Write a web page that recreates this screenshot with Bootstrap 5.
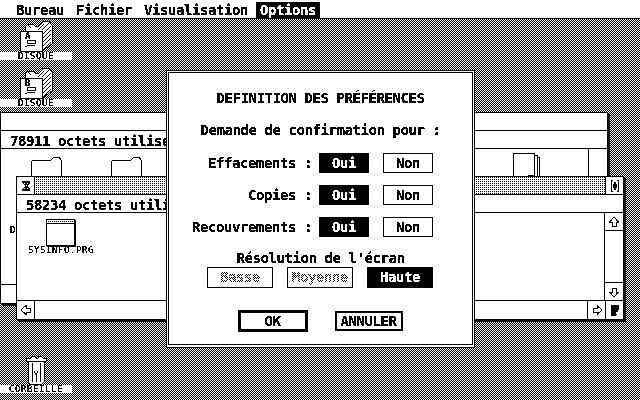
<!DOCTYPE html>
<html lang="fr">

<head>
  <meta charset="UTF-8">
  <meta name="viewport" content="width=device-width, initial-scale=1.0">
  <title>GEM Desktop - Préférences</title>
  <link rel="stylesheet" href="https://cdn.jsdelivr.net/npm/bootstrap@5.3.0/dist/css/bootstrap.min.css">
  <style>
    html, body {
      width: 640px;
      height: 400px;
      margin: 0;
      overflow: hidden;
    }

    .desk {
      width: 640px;
      height: 400px;
      overflow: hidden;
      color: #000;
      background: repeating-conic-gradient(#000 0 25%, #fff 0 50%) 0 0 / 2px 2px;
      font: bold 14px/16px "DejaVu Sans Mono", monospace;
      letter-spacing: -.43px;
      filter: url(#mono);
    }

    svg { display: block; shape-rendering: crispEdges; }

    /* menu bar */
    .menu-bar {
      height: 19px;
      padding-left: 12px;
      background: #fff;
      border-bottom: 1px solid #000;
      gap: 4px;
    }
    .menu-title { padding: 0 4px; height: 16px; margin-top: 2px; white-space: pre; }
    .menu-title.active { background: #000; color: #fff; -webkit-text-stroke: .4px #fff; }

    /* desktop icons */
    .desk-icon { left: 0; width: 72px; }
    .icon-a { top: 20px; }
    .icon-b { top: 67px; }
    .icon-trash { top: 355px; }
    .disk-svg { margin-left: 19px; }
    .trash-svg { margin-left: 25px; }
    .icon-label, .small-txt {
      font: 9px/8px "DejaVu Sans Mono", monospace;
      letter-spacing: .58px;
      white-space: nowrap;
      filter: url(#mono-dark);
    }
    .icon-label {
      height: 8px;
      background: #fff;
      text-align: center;
    }

    /* windows */
    .gem-win {
      background: #fff;
      border: 1px solid #000;
      box-shadow: 2px 2px 0 #000;
    }
    .win-back { left: 0; top: 112px; width: 608px; height: 192px; }
    .win-front { left: 16px; top: 176px; width: 608px; height: 144px; }
    .title-row { height: 18px; border-bottom: 1px solid #000; flex: none; }
    .info-row {
      height: 18px;
      padding-left: 9px;
      border-bottom: 1px solid #000;
      white-space: nowrap;
      flex: none;
      line-height: 20px;
    }
    .ctl-box {
      width: 18px;
      flex: none;
      background: #fff;
    }
    .ctl-v { width: 100%; height: 18px; }
    .dots {
      background: conic-gradient(#000 0 25%, #fff 0) 0 0 / 2px 2px;
    }
    .win-body { flex: 1; min-height: 0; position: relative; }
    .v-bar { width: 19px; flex: none; border-left: 1px solid #000; }
    .h-bar { height: 19px; flex: none; border-top: 1px solid #000; }
    .line-t { border-top: 1px solid #000; }
    .line-b { border-bottom: 1px solid #000; }
    .line-l { border-left: 1px solid #000; }
    .line-r { border-right: 1px solid #000; }

    /* things lying on the window canvas */
    .folder-1 { left: 30px; top: 7px; }
    .folder-2 { left: 110px; top: 7px; }
    .doc-1 { left: 511px; top: 3px; }
    .back-label { left: 9px; top: 77px; }
    .prg-icon { left: 29px; top: 6px; }
    .prg-label { left: 11px; top: 33px; }

    /* dialog */
    .dlg-outer {
      left: 166px;
      top: 70px;
      width: 309px;
      height: 278px;
      padding: 1px 1px 2px;
      background: #fff;
      border: 1px solid #000;
    }
    .dlg-inner {
      height: 100%;
      background: #fff;
      border: 1px solid #000;
      padding-top: 17px;
    }
    .dlg-txt { height: 16px; white-space: pre; }
    .dlg-sub { margin-top: 16px; }
    .dlg-row { height: 20px; white-space: pre; margin-top: 12px; }
    .dlg-row.first { margin-top: 15px; }
    .row-label { width: 143px; text-align: right; line-height: 20px; margin-right: 7px; }
    .st-btn {
      font: inherit;
      letter-spacing: inherit;
      border: 1px solid #000;
      border-radius: 0;
      padding: 0;
      color: #000;
      background: #fff;
      line-height: 18px;
    }
    .st-btn.yes { width: 50px; }
    .st-btn.yes + .st-btn.yes { margin-left: 14px; }
    .st-btn.res { width: 66px; height: 21px; line-height: 19px; }
    .st-btn.on { background: #000; color: #fff; -webkit-text-stroke: .4px #fff; }
    .st-btn.off span {
      color: transparent;
      background: repeating-conic-gradient(#000 0 25%, #fff 0 50%) 0 0 / 2px 2px;
      -webkit-background-clip: text;
      background-clip: text;
    }
    .st-btn.ok { width: 70px; height: 22px; border-width: 3px; line-height: 16px; }
    .st-btn.cancel { width: 68px; height: 20px; border-width: 2px; line-height: 16px; }
    .res-head { margin-top: 13px; }
    .res-row { margin-top: 1px; gap: 14px; padding-right: 1px; }
    .act-row { margin-top: 22px; gap: 27px; height: 22px; padding-right: 1px; }
  </style>
</head>

<body>
  <svg width="0" height="0" class="position-absolute">
    <filter id="mono" color-interpolation-filters="sRGB" x="0" y="0" width="100%" height="100%">
      <feComponentTransfer>
        <feFuncR type="discrete" tableValues="0 0 1"/>
        <feFuncG type="discrete" tableValues="0 0 1"/>
        <feFuncB type="discrete" tableValues="0 0 1"/>
      </feComponentTransfer>
    </filter>
    <filter id="mono-dark" color-interpolation-filters="sRGB" x="0" y="0" width="100%" height="100%">
      <feComponentTransfer>
        <feFuncR type="discrete" tableValues="0 0 0 1"/>
        <feFuncG type="discrete" tableValues="0 0 0 1"/>
        <feFuncB type="discrete" tableValues="0 0 0 1"/>
      </feComponentTransfer>
    </filter>
    <symbol id="disk" viewBox="0 0 34 32">
      <path d="M6 11V7l3-3h5l2 2h4l3-3 1-2h6l2 3 1 1v19L23 31H1V11z" fill="#fff" stroke="#000"/>
      <path d="M9 5l3 3M24 14l8-8M24 18l8-8M24 22l8-8M24 26l8-8M24 30l8-8M19 10l6-6M23 10l7-7" fill="none" stroke="#000"/>
      <rect x="1" y="11" width="22" height="20" fill="#fff" stroke="#000"/>
      <path d="M8 20h8v3H8zM8 25h8M6 26h2" fill="none" stroke="#000"/>
    </symbol>
  </svg>

  <div class="desk position-relative">
    <div class="menu-bar d-flex">
      <span class="menu-title">Bureau</span>
      <span class="menu-title">Fichier</span>
      <span class="menu-title">Visualisation</span>
      <span class="menu-title active">Options</span>
    </div>

    <div class="desk-icon icon-a position-absolute">
      <svg class="disk-svg" width="34" height="32" viewBox="0 0 34 32"><use href="#disk"/><text x="6" y="19" font-family="DejaVu Sans Mono" font-size="9">A</text></svg>
      <div class="icon-label">DISQUE</div>
    </div>
    <div class="desk-icon icon-b position-absolute">
      <svg class="disk-svg" width="34" height="32" viewBox="0 0 34 32"><use href="#disk"/><text x="6" y="19" font-family="DejaVu Sans Mono" font-size="9">B</text></svg>
      <div class="icon-label">DISQUE</div>
    </div>
    <div class="desk-icon icon-trash position-absolute">
      <svg class="trash-svg" width="22" height="30" viewBox="0 0 22 30">
        <path d="M2 3h4l2-2h2l1 2h2l1-2h2l2 2h3v3H1V3z" fill="#fff" stroke="#000"/>
        <path d="M3 6v21l2 2h12l2-2V6z" fill="#fff" stroke="#000"/>
        <path d="M7 8v19M15 8v19M11 20v7M9 16l2 4 2-4" fill="none" stroke="#000"/>
      </svg>
      <div class="icon-label">CORBEILLE</div>
    </div>

    <!-- window behind -->
    <div class="gem-win win-back position-absolute d-flex flex-column">
      <div class="title-row"></div>
      <div class="info-row">78911 octets utilisés</div>
      <div class="win-body d-flex">
        <div class="flex-grow-1 position-relative">
          <svg class="position-absolute folder-1" width="31" height="22" viewBox="0 0 31 22">
            <path d="M0 22V6l2-2h18l3-3h5l2 3v18" fill="#fff" stroke="#000"/>
          </svg>
          <svg class="position-absolute folder-2" width="31" height="22" viewBox="0 0 31 22">
            <path d="M0 22V6l2-2h18l3-3h5l2 3v18" fill="#fff" stroke="#000"/>
          </svg>
          <svg class="position-absolute doc-1" width="28" height="26" viewBox="0 0 28 26">
            <path d="M25 5h2v21M23 3h2v23" fill="#fff" stroke="#000"/>
            <rect x="1" y="1" width="21" height="25" fill="#fff" stroke="#000"/>
            <path d="M16 26v-3h6l-3 3" fill="#fff" stroke="#000"/>
          </svg>
          <span class="small-txt position-absolute back-label">DISQUE</span>
        </div>
        <div class="v-bar"></div>
      </div>
      <div class="h-bar"></div>
    </div>

    <!-- active window -->
    <div class="gem-win win-front position-absolute d-flex flex-column">
      <div class="title-row d-flex">
        <div class="ctl-box line-r d-flex align-items-center justify-content-center">
          <svg width="8" height="10" viewBox="0 0 8 10"><path d="M0 0h8v2L5 5l3 3v2H0V8l3-3L0 2z" fill="#000"/><path d="M2 2h1v1H2zM5 2h1v1H5zM4 4h1v1H4zM2 7h1v1H2zM5 7h1v1H5z" fill="#fff"/></svg>
        </div>
        <div class="flex-grow-1 dots"></div>
        <div class="ctl-box line-l d-flex align-items-center justify-content-center">
          <svg width="8" height="12" viewBox="0 0 8 12"><path d="M0 0h2v1H1v10h1v1H0zM8 0H6v1h1v10H6v1h2z" fill="#000"/><path d="M4 1l2 4v2l-2 4-2-4V5z" fill="#000"/></svg>
        </div>
      </div>
      <div class="info-row">58234 octets utilisés</div>
      <div class="win-body d-flex">
        <div class="flex-grow-1 position-relative">
          <svg class="position-absolute prg-icon" width="30" height="28" viewBox="0 0 30 28">
            <rect x="0.5" y="0.5" width="28" height="26" fill="#fff" stroke="#000"/>
            <path d="M2 2h1v1H2zM4 2h1v1H4zM6 2h1v1H6zM8 2h1v1H8zM10 2h1v1h-1zM12 2h1v1h-1zM14 2h1v1h-1zM16 2h1v1h-1zM18 2h1v1h-1zM20 2h1v1h-1zM22 2h1v1h-1zM24 2h1v1h-1zM26 2h1v1h-1z" fill="#000"/>
            <path d="M1 4h27" stroke="#000"/>
            <path d="M29 1v27H1" fill="none" stroke="#000" stroke-width="2"/>
          </svg>
          <span class="small-txt position-absolute prg-label">SYSINFO.PRG</span>
        </div>
        <div class="v-bar d-flex flex-column">
          <div class="ctl-box ctl-v line-b d-flex align-items-center justify-content-center">
            <svg width="10" height="10" viewBox="0 0 10 10"><path d="M5 0L9.5 5H7v4H3V5H.5z" fill="#fff" stroke="#000"/></svg>
          </div>
          <div class="flex-grow-1"></div>
          <div class="ctl-box ctl-v line-t d-flex align-items-center justify-content-center">
            <svg width="10" height="10" viewBox="0 0 10 10"><path d="M5 10L9.5 5H7V1H3v4H.5z" fill="#fff" stroke="#000"/></svg>
          </div>
        </div>
      </div>
      <div class="h-bar d-flex">
        <div class="ctl-box line-r d-flex align-items-center justify-content-center">
          <svg width="10" height="10" viewBox="0 0 10 10"><path d="M0 5L5 .5V3h4v4H5v2.5z" fill="#fff" stroke="#000"/></svg>
        </div>
        <div class="flex-grow-1"></div>
        <div class="ctl-box line-l d-flex align-items-center justify-content-center">
          <svg width="10" height="10" viewBox="0 0 10 10"><path d="M10 5L5 .5V3H1v4h4v2.5z" fill="#fff" stroke="#000"/></svg>
        </div>
        <div class="ctl-box line-l d-flex align-items-center justify-content-center">
          <svg width="8" height="11" viewBox="0 0 8 11"><path d="M0 0h8v11H0z" fill="#000"/><path d="M8 0v4L5 11h3zM5 9l1-3v3z" fill="#fff"/></svg>
        </div>
      </div>
    </div>

    <!-- preferences dialog -->
    <div class="dlg-outer position-absolute">
      <div class="dlg-inner">
        <div class="dlg-txt text-center">DEFINITION DES PRÉFÉRENCES</div>
        <div class="dlg-txt dlg-sub text-center">Demande de confirmation pour :</div>

        <div class="dlg-row first d-flex">
          <div class="row-label">Effacements :</div>
          <button class="btn st-btn yes on">Oui</button>
          <button class="btn st-btn yes">Non</button>
        </div>
        <div class="dlg-row d-flex">
          <div class="row-label">Copies :</div>
          <button class="btn st-btn yes on">Oui</button>
          <button class="btn st-btn yes">Non</button>
        </div>
        <div class="dlg-row d-flex">
          <div class="row-label">Recouvrements :</div>
          <button class="btn st-btn yes on">Oui</button>
          <button class="btn st-btn yes">Non</button>
        </div>

        <div class="dlg-txt text-center res-head">Résolution de l'écran</div>
        <div class="d-flex justify-content-center res-row">
          <button class="btn st-btn res off"><span>Basse</span></button>
          <button class="btn st-btn res off"><span>Moyenne</span></button>
          <button class="btn st-btn res on">Haute</button>
        </div>
        <div class="d-flex justify-content-center align-items-center act-row">
          <button class="btn st-btn ok">OK</button>
          <button class="btn st-btn cancel">ANNULER</button>
        </div>
      </div>
    </div>
  </div>

  <script src="https://cdn.jsdelivr.net/npm/bootstrap@5.3.0/dist/js/bootstrap.bundle.min.js"></script>
</body>

</html>
